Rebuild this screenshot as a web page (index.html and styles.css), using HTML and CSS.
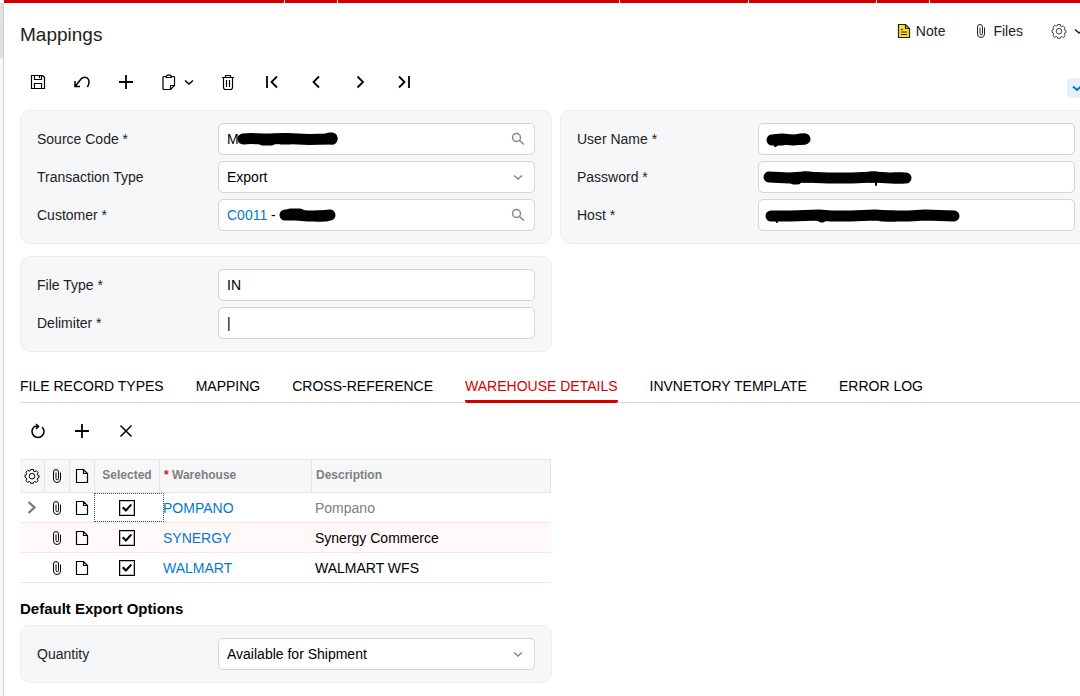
FILE: index.html
```html
<!DOCTYPE html>
<html lang="en">
<head>
  <meta charset="UTF-8" />
  <meta name="viewport" content="width=device-width, initial-scale=1.0" />
  <title>Mappings</title>
  <link rel="stylesheet" href="styles.css">
</head>
<body>
  <!-- shared icons -->
  <svg class="icon-defs" aria-hidden="true">
    <symbol id="clip" viewBox="0 0 16 16">
      <path d="M4.500 4.500V11a3.500 3.500 0 0 0 7 0V4.500M4.500 5V4a2.500 2.500 0 0 1 5 0v6.500a1.200 1.200 0 0 1-2.500 0V4.500" />
    </symbol>
    <symbol id="doc" viewBox="0 0 16 16">
      <path d="M2.500 1.500h7l4 4v9h-11zM9.500 1.500v4h4" />
    </symbol>
    <symbol id="gear" viewBox="0 0 16 16">
      <path d="M6.700 1.500h2.600l.4 1.700 1.100.5 1.500-.9 1.800 1.800-.9 1.500.5 1.100 1.300.3v2.200l-1.300.3-.5 1.200.9 1.500-1.800 1.700-1.500-.9-1.100.5-.4 1.300H6.700l-.4-1.300-1.100-.5-1.500.9-1.800-1.700.9-1.500-.5-1.200L1 9.200V7l1.300-.3.5-1.100-.9-1.500 1.800-1.800 1.500.9 1.100-.5z" />
      <circle cx="8" cy="8.200" r="2.800" />
    </symbol>
    <symbol id="plus" viewBox="0 0 16 16"><path d="M8 1v14M1 8h14" /></symbol>
    <symbol id="down" viewBox="0 0 16 16"><path d="M4 6.500l4 3.500 4-3.500" /></symbol>
    <symbol id="search" viewBox="0 0 16 16">
      <circle cx="6.500" cy="6.500" r="4" /><path d="M9.500 9.500l4.500 4" />
    </symbol>
  </svg>

  <div class="top-bar">
    <span class="seg-l"></span><span class="seg-s"></span><span class="seg-l"></span><span class="seg-m"></span><span class="seg-m"></span><span class="seg-s"></span><span class="seg-e"></span>
  </div>

  <div class="layout">
    <div class="side"></div>
    <main class="page">
      <header class="page-head">
        <h1>Mappings</h1>
        <div class="head-actions">
          <button class="link-btn">
            <svg class="icon" viewBox="0 0 16 16"><path class="note" d="M2.500 1.500h7l4 4v9h-11z" /><path d="M9.500 1.500v4h4M5 6.500h2M5 9h6M5 11.500h6" /></svg>
            Note
          </button>
          <button class="link-btn files">
            <svg class="icon fine"><use href="#clip" /></svg>
            Files
          </button>
          <button class="link-btn tools" aria-label="Settings">
            <svg class="icon gray"><use href="#gear" /></svg>
            <svg class="icon bold"><use href="#down" /></svg>
          </button>
        </div>
      </header>

      <div class="toolbar">
        <button class="tool" aria-label="Save"><svg class="icon" viewBox="0 0 16 16"><path d="M1.500 1.500h11l2 2v11h-13zM4.500 1.500v4h7v-4M9.500 2v2M4.500 14.500v-5h7v5" /></svg></button>
        <button class="tool" aria-label="Undo"><svg class="icon bold" viewBox="0 0 16 16"><path d="M1 7v5.500h5M1.500 12L7 5c2-2.500 6-2.500 7.500.5 1 2.300.5 4.800-1 7.500" /></svg></button>
        <button class="tool" aria-label="Add"><svg class="icon plus"><use href="#plus" /></svg></button>
        <button class="tool wide" aria-label="Clipboard">
          <svg class="icon" viewBox="0 0 16 16"><path d="M5 2.500H3a1 1 0 0 0-1 1v11a1 1 0 0 0 1 1h6.500l4-4v-8a1 1 0 0 0-1-1h-2M5 3.500c0-3.500 5.500-3.500 5.500 0zM9.500 15.500v-4h4" /></svg>
          <svg class="icon bold"><use href="#down" /></svg>
        </button>
        <button class="tool" aria-label="Delete"><svg class="icon" viewBox="0 0 16 16"><path d="M2 3.500h12M5.500 3.500v-2h5v2M3.500 3.500v10a2 2 0 0 0 1.500 2h6a2 2 0 0 0 1.500-2v-10M6.500 6v7M9.500 6v7" /></svg></button>
        <button class="tool" aria-label="First"><svg class="icon thick" viewBox="0 0 16 16"><path d="M3 2v12M13 2.500L7.500 8l5.500 5.500" /></svg></button>
        <button class="tool" aria-label="Previous"><svg class="icon thick" viewBox="0 0 16 16"><path d="M11 2.500L5.500 8l5.500 5.500" /></svg></button>
        <button class="tool" aria-label="Next"><svg class="icon thick" viewBox="0 0 16 16"><path d="M5.500 2.500L11 8l-5.500 5.500" /></svg></button>
        <button class="tool" aria-label="Last"><svg class="icon thick" viewBox="0 0 16 16"><path d="M3 2.500L8.500 8 3 13.500M13 2v12" /></svg></button>
        <button class="collapse" aria-label="Collapse"><svg class="icon"><use href="#down" /></svg></button>
      </div>

      <div class="columns">
        <section class="panel">
          <div class="row">
            <label for="source">Source Code *</label>
            <div class="field">
              <input type="text" id="source" value="M" />
              <svg class="mask"><path d="M25 16c8-1 15 0 23 0s21-1 32 0 20 0 34 0" /><path d="M45 17h8M64 16h7M111 15h3v1" /></svg>
              <svg class="icon end"><use href="#search" /></svg>
            </div>
          </div>
          <div class="row">
            <label for="type">Transaction Type</label>
            <div class="field">
              <select id="type"><option>Export</option></select>
              <svg class="icon end"><use href="#down" /></svg>
            </div>
          </div>
          <div class="row">
            <span class="label">Customer *</span>
            <div class="field box">
              <a href="#">C0011</a>&nbsp;-
              <svg class="mask"><path d="M67 16h11l12 1h12l10-1" /><path d="M72 15h10M99 17h9" /></svg>
              <svg class="icon end"><use href="#search" /></svg>
            </div>
          </div>
        </section>

        <section class="panel">
          <div class="row">
            <label for="user">User Name *</label>
            <div class="field">
              <input type="text" id="user" />
              <svg class="mask"><path d="M14 17l10-1 11 1 12-1" /><path d="M18 17h6M42 16h4" /><path class="thin" d="M17 23l2-1" /></svg>
            </div>
          </div>
          <div class="row">
            <label for="password">Password *</label>
            <div class="field">
              <input type="text" id="password" />
              <svg class="mask"><path d="M11 16l20 1 15-1 24 1h24l22-1 16 1h16" /><path d="M36 18h3M46 16h5M112 16h6M136 17h8" /><path class="thin" d="M118 20v4" /></svg>
            </div>
          </div>
          <div class="row">
            <label for="host">Host *</label>
            <div class="field">
              <input type="text" id="host" />
              <svg class="mask"><path d="M13 17h20l28-1 12 1h20l24-1 14 1h20l16-1 29 1" /><path d="M62 17l2 1M124 17h12" /><path class="thin" d="M18 21l1 2" /></svg>
            </div>
          </div>
        </section>

        <section class="panel">
          <div class="row">
            <label for="filetype">File Type *</label>
            <div class="field"><input type="text" id="filetype" value="IN" /></div>
          </div>
          <div class="row">
            <label for="delimiter">Delimiter *</label>
            <div class="field"><input type="text" id="delimiter" value="|" /></div>
          </div>
        </section>
      </div>

      <nav class="tabs">
        <button>FILE RECORD TYPES</button>
        <button>MAPPING</button>
        <button>CROSS-REFERENCE</button>
        <button class="active">WAREHOUSE DETAILS</button>
        <button>INVNETORY TEMPLATE</button>
        <button>ERROR LOG</button>
      </nav>

      <div class="toolbar grid-tools">
        <button class="tool" aria-label="Refresh"><svg class="icon bold" viewBox="0 0 16 16"><path d="M4 4a6 6 0 1 0 8 0M3.500 3.500h5M6 1l2.500 2.500L6 6" /></svg></button>
        <button class="tool" aria-label="Add row"><svg class="icon plus"><use href="#plus" /></svg></button>
        <button class="tool" aria-label="Delete row"><svg class="icon bold" viewBox="0 0 16 16"><path d="M2.500 2.500l11 11M13.500 2.500l-11 11" /></svg></button>
      </div>

      <div class="columns">
        <div>
          <table>
            <colgroup><col class="c-icon"><col class="c-icon"><col class="c-icon"><col class="c-check"><col class="c-code"><col></colgroup>
            <thead>
              <tr>
                <th><svg class="icon fine"><use href="#gear" /></svg></th>
                <th><svg class="icon fine"><use href="#clip" /></svg></th>
                <th><svg class="icon"><use href="#doc" /></svg></th>
                <th>Selected</th>
                <th class="text"><span class="req">*</span> Warehouse</th>
                <th class="text">Description</th>
              </tr>
            </thead>
            <tbody>
              <tr>
                <td><svg class="icon current" viewBox="0 0 16 16"><path d="M4.500 2l6 5.500-6 5.500" /></svg></td>
                <td><svg class="icon fine"><use href="#clip" /></svg></td>
                <td><svg class="icon"><use href="#doc" /></svg></td>
                <td class="focused"><input type="checkbox" aria-label="Select POMPANO" checked /></td>
                <td class="text"><a href="#">POMPANO</a></td>
                <td class="text muted">Pompano</td>
              </tr>
              <tr class="alt">
                <td></td>
                <td><svg class="icon fine"><use href="#clip" /></svg></td>
                <td><svg class="icon"><use href="#doc" /></svg></td>
                <td><input type="checkbox" aria-label="Select SYNERGY" checked /></td>
                <td class="text"><a href="#">SYNERGY</a></td>
                <td class="text">Synergy Commerce</td>
              </tr>
              <tr>
                <td></td>
                <td><svg class="icon fine"><use href="#clip" /></svg></td>
                <td><svg class="icon"><use href="#doc" /></svg></td>
                <td><input type="checkbox" aria-label="Select WALMART" checked /></td>
                <td class="text"><a href="#">WALMART</a></td>
                <td class="text">WALMART WFS</td>
              </tr>
            </tbody>
          </table>

          <h2>Default Export Options</h2>
          <section class="panel">
            <div class="row">
              <label for="quantity">Quantity</label>
              <div class="field">
                <select id="quantity"><option>Available for Shipment</option></select>
                <svg class="icon end"><use href="#down" /></svg>
              </div>
            </div>
          </section>
        </div>
      </div>
    </main>
  </div>
</body>
</html>
```

FILE: styles.css
```css
* {
  box-sizing: border-box;
}
body {
  font-family: "Liberation Sans", Arial, sans-serif;
  font-size: 14px;
  line-height: 16px;
  color: #000;
  background-color: #fff;
  margin: 0;
  min-height: 100vh;
  display: flex;
  flex-direction: column;
  overflow-x: hidden;
}
button, input, select {
  font: inherit;
  color: inherit;
}
button {
  background: none;
  border: none;
  padding: 0;
  cursor: pointer;
}
a {
  color: #027acc;
  text-decoration: none;
}

/* icons */
.icon-defs {
  position: absolute;
  width: 0;
  height: 0;
}
.icon {
  display: block;
  flex: none;
  width: 16px;
  height: 16px;
  fill: none;
  stroke: currentColor;
  stroke-width: 1.2;
}
.fine {
  stroke-width: 1;
}
.bold {
  stroke-width: 1.5;
}
.thick, .plus {
  stroke-width: 1.8;
}
.gray {
  color: #444;
  stroke-width: 1;
}
.note {
  fill: #ffdd1c;
}

/* red bar on top */
.top-bar {
  display: flex;
  gap: 1px;
  height: 3px;
  margin-left: 4px;
}
.top-bar span {
  background-color: #d40000;
}
.seg-l { flex: 281; }
.seg-m { flex: 128; }
.seg-s { flex: 52; }
.seg-e { flex: 150; }

.layout {
  display: flex;
  flex: 1;
}
.side {
  width: 4px;
  flex: none;
  border-right: 1px solid #cfd0d4;
  background: linear-gradient(#e1e1e1 55px, #f5f6f8 55px);
}
/* content runs a little past the right edge */
.page {
  flex: 1;
  min-width: 0;
  margin-right: -12px;
  padding: 8px 0 12px 16px;
}

.page-head {
  display: flex;
  justify-content: space-between;
  align-items: flex-start;
  height: 52px;
}
h1 {
  font-size: 19px;
  line-height: 24px;
  font-weight: normal;
  color: #222;
  margin: 12px 0 0;
}
.head-actions {
  display: flex;
  gap: 28px;
  margin-top: 12px;
  padding-right: 5px;
}
.link-btn {
  display: flex;
  align-items: center;
  gap: 4px;
  color: #222;
}

.toolbar {
  display: flex;
  align-items: center;
  gap: 8px;
  height: 38px;
}
.tool {
  display: flex;
  align-items: center;
  justify-content: center;
  width: 36px;
  height: 36px;
}
.wide {
  width: 50px;
  gap: 4px;
  padding-left: 4px;
}
.collapse {
  width: 20px;
  height: 20px;
  margin: 12px 5px 0 auto;
  padding-left: 2px;
  border-radius: 5px;
  background-color: #e5f1fa;
  color: #027acc;
}
.collapse .icon {
  stroke-width: 2;
}

/* form panels */
.columns {
  display: grid;
  grid-template-columns: 1fr 1fr;
  gap: 12px 8px;
}
.toolbar + .columns {
  margin-top: 9px;
}
.panel {
  display: flex;
  flex-direction: column;
  gap: 6px;
  padding: 12px 16px;
  border: 1px solid #edeef0;
  border-radius: 10px;
  background-color: #f5f7f9;
}
.row {
  display: flex;
  align-items: center;
}
.row label, .label {
  flex: none;
  width: 181px;
  color: #222;
}
.field {
  position: relative;
  flex: 1;
  height: 32px;
}
.field input, .field select, .box {
  width: 100%;
  height: 32px;
  padding: 0 8px;
  border: 1px solid #d2d4d8;
  border-radius: 5px;
  background-color: #fff;
  appearance: none;
}
.box {
  display: flex;
  align-items: center;
}
.end {
  position: absolute;
  right: 9px;
  top: 8px;
  color: #858585;
  stroke-width: 1.5;
  pointer-events: none;
}
.box .end {
  right: 8px;
  top: 7px;
}
.mask {
  position: absolute;
  left: 0;
  top: 0;
  width: 100%;
  height: 32px;
  fill: none;
  stroke: #000;
  stroke-width: 11;
  stroke-linecap: round;
  stroke-linejoin: round;
  pointer-events: none;
}
.box .mask {
  left: -1px;
  top: -1px;
}
.mask .thin {
  stroke-width: 2;
}

/* tabs */
.tabs {
  display: flex;
  gap: 32px;
  height: 35px;
  margin-top: 16px;
  border-bottom: 1px solid #dcdde0;
}
.tabs button {
  height: 35px;
  padding-top: 4px;
  white-space: nowrap;
  border-bottom: 3px solid transparent;
}
.tabs .active {
  color: #d40000;
  border-color: #d40000;
  border-radius: 2px;
}
.grid-tools {
  margin-top: 9px;
}

/* warehouse grid */
table {
  width: 100%;
  table-layout: fixed;
  border-collapse: separate;
  border-spacing: 0;
  border-right: 1px solid transparent;
}
.c-icon { width: 25px; }
.c-check { width: 65px; }
.c-code { width: 152px; }
th {
  height: 34px;
  padding: 0 0 2px;
  font-size: 12px;
  color: #808080;
  background-color: #f5f7f9;
  border: solid #e4e5e8;
  border-width: 1px 1px 1px 0;
}
th .icon {
  color: #000;
  margin: 2px auto 0;
}
td {
  height: 30px;
  padding: 0 1px 0 0;
  border-bottom: 1px solid #fae3e3;
}
td .icon {
  margin: 0 auto;
}
.text {
  text-align: left;
  padding-left: 4px;
}
td.text {
  padding-left: 3px;
}
.alt td {
  background-color: #fff9f9;
}
.req {
  color: #f00;
}
.muted {
  color: #808080;
}
.current {
  color: #777;
  stroke-width: 2.2;
}
.focused {
  position: relative;
}
.focused::after {
  content: "";
  position: absolute;
  inset: 0 -4px 0 -1px;
  border: 1px dotted #555;
  pointer-events: none;
}
input[type="checkbox"] {
  appearance: none;
  display: block;
  width: 16px;
  height: 16px;
  margin: 1px auto 0;
  border: 1px solid #000;
  outline: 1px solid #0004;
  outline-offset: -2px;
  background-color: #fff;
}
input[type="checkbox"]:checked::before {
  content: "";
  display: block;
  width: 14px;
  height: 14px;
  background-color: #000;
  clip-path: polygon(14% 50%, 26% 40%, 42% 58%, 76% 20%, 86% 30%, 42% 78%);
}

h2 {
  font-size: 15px;
  line-height: 18px;
  margin: 17px 0 7px;
}
```
